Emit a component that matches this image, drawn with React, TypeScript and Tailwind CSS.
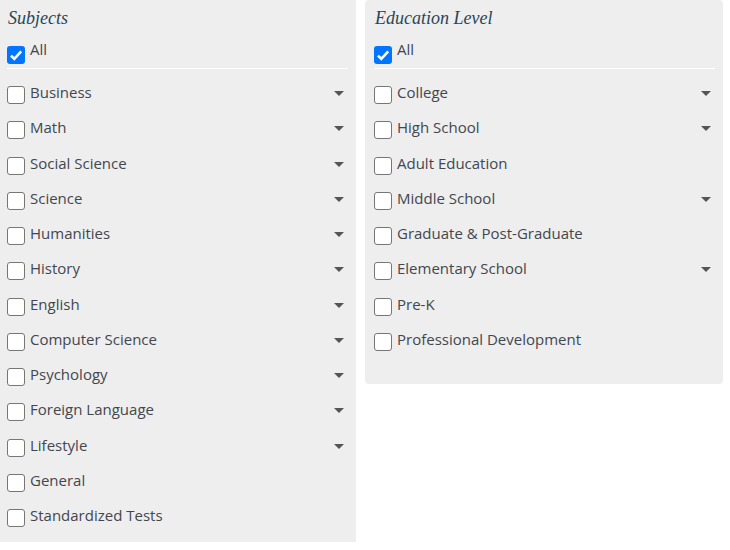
const subjects = [
  { label: 'Business', more: true },
  { label: 'Math', more: true },
  { label: 'Social Science', more: true },
  { label: 'Science', more: true },
  { label: 'Humanities', more: true },
  { label: 'History', more: true },
  { label: 'English', more: true },
  { label: 'Computer Science', more: true },
  { label: 'Psychology', more: true },
  { label: 'Foreign Language', more: true },
  { label: 'Lifestyle', more: true },
  { label: 'General', more: false },
  { label: 'Standardized Tests', more: false },
];

const levels = [
  { label: 'College', more: true },
  { label: 'High School', more: true },
  { label: 'Adult Education', more: false },
  { label: 'Middle School', more: true },
  { label: 'Graduate & Post-Graduate', more: false },
  { label: 'Elementary School', more: true },
  { label: 'Pre-K', more: false },
  { label: 'Professional Development', more: false },
];

function Box({ checked }: { checked?: boolean }) {
  if (checked) {
    return (
      <span className="mt-[8px] flex h-[18px] w-[18px] shrink-0 items-center justify-center rounded-[3px] bg-[#0075ff]">
        <svg viewBox="0 0 18 18" className="h-[18px] w-[18px]">
          <path d="M4 9.6l3.3 3.2L14.2 5.4" fill="none" stroke="#fff" strokeWidth="2.6" />
        </svg>
      </span>
    );
  }
  return <span className="mt-[6px] block h-[18px] w-[18px] shrink-0 rounded-[3px] border border-[#767676] bg-white" />;
}

function Caret() {
  return (
    <svg viewBox="0 0 10 5" className="mt-[11px] h-[5px] w-[10px] shrink-0">
      <path d="M0 0h10L5 5z" fill="#555" />
    </svg>
  );
}

function Panel({ title, items, className }: { title: string; items: { label: string; more: boolean }[]; className: string }) {
  return (
    <div className={`bg-[#eeeeee] pr-[12px] ${className}`}>
      <h2 className="h-[38px] pl-[1px] pt-[4px] text-[18px] leading-[28px] italic text-[#2b4555] [font-family:'Liberation_Serif',serif]">
        {title}
      </h2>
      <label className="flex h-[30px] items-start">
        <Box checked />
        <span className="pl-[5px] pt-[1px] text-[15px] leading-[20px]">All</span>
      </label>
      <div className="mr-[-4px] h-px bg-white" />
      <div className="mt-[11px] flex flex-col">
        {items.map((item) => (
          <label key={item.label} className="flex h-[35.25px] items-start">
            <Box />
            <span className="flex-1 pl-[5px] pt-[2px] text-[15px] leading-[20px]">{item.label}</span>
            {item.more && <Caret />}
          </label>
        ))}
      </div>
    </div>
  );
}

export default function App() {
  return (
    <div className="flex h-[550px] w-[730px] items-start gap-[9px] bg-white text-[#42474e] [font-family:'Open_Sans',sans-serif] font-medium">
      <Panel title="Subjects" items={subjects} className="w-[356px] pb-[4px] pl-[7px]" />
      <Panel title="Education Level" items={levels} className="w-[358px] rounded-[4px] pb-[22px] pl-[9px]" />
    </div>
  );
}
